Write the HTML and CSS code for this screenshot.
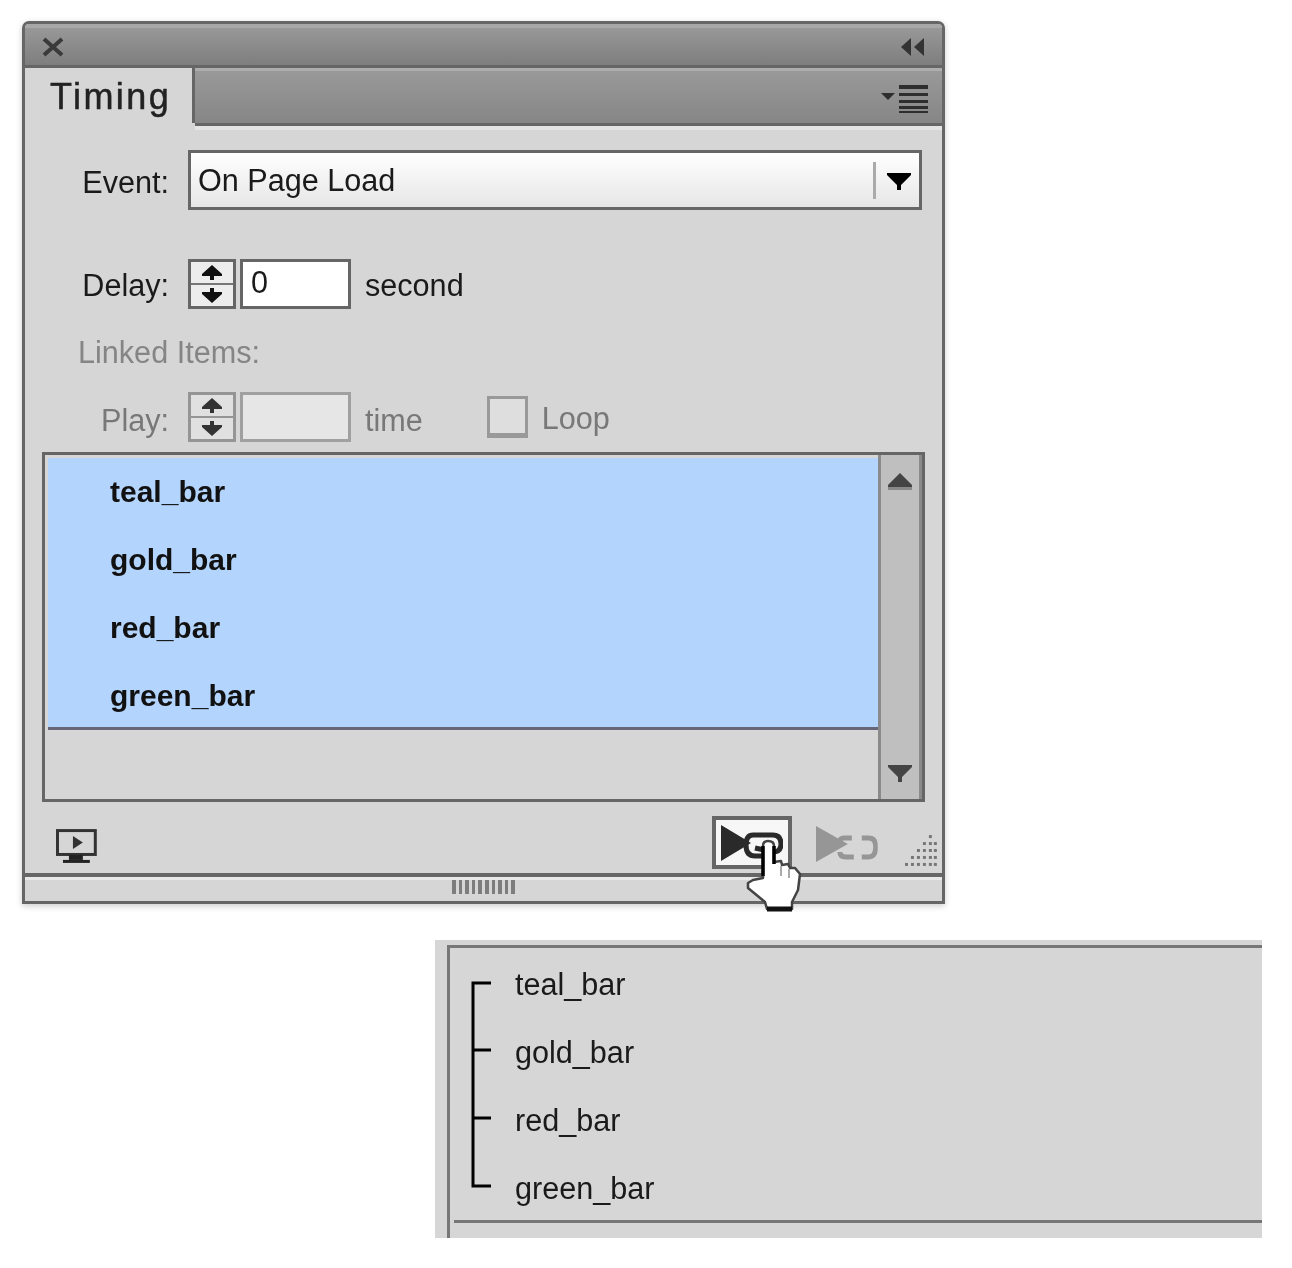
FILE: index.html
```html
<!DOCTYPE html>
<html lang="en">

<head>
	<meta charset="UTF-8">
	<title>Timing</title>
	<link rel="stylesheet" href="styles.css">
</head>

<body>
	<svg class="defs" width="0" height="0">
		<symbol id="upArrow" viewBox="0 0 24 18">
			<path d="M12 0 L24 12 L24 14 L0 14 L0 12 Z" />
			<rect x="0" y="14" width="24" height="3" opacity="0.45" />
		</symbol>
		<symbol id="downArrow" viewBox="0 0 24 18">
			<path d="M0 1 L24 1 L24 3 L14 13 L14 18 L10 18 L10 13 L0 3 Z" />
		</symbol>
		<symbol id="stepUp" viewBox="0 0 20 16">
			<path d="M10 0 L20 9 L20 11 L12 11 L12 15 L8 15 L8 11 L0 11 L0 9 Z" />
		</symbol>
		<symbol id="stepDown" viewBox="0 0 20 16">
			<path d="M8 0 L12 0 L12 4 L20 4 L20 6 L10 15 L0 6 L0 4 L8 4 Z" />
		</symbol>
		<symbol id="link" viewBox="0 0 62 36">
			<path d="M0 0 L32 18 L0 36 Z" />
			<path d="M36 12 L28 12 Q24 12 24 16 M24 26 Q24 31 30 31 L38 31" fill="none" stroke="currentColor" stroke-width="5" />
			<path d="M46 12 L53 12 Q60 12 60 21 Q60 31 53 31 L46 31" fill="none" stroke="currentColor" stroke-width="5" />
		</symbol>
		<symbol id="linkOn" viewBox="0 0 62 36">
			<path d="M0 0 L30 18 L0 36 Z" />
			<path d="M38 10 L32 10 Q25 10 25 20 Q25 31 34 31 L42 31" fill="none" stroke="currentColor" stroke-width="5" />
			<path d="M38 10 L52 10 Q60 10 60 19 Q60 27 52 27 L34 23" fill="none" stroke="currentColor" stroke-width="5" />
		</symbol>
	</svg>

	<div class="panel">
		<div class="titlebar">
			<svg class="closeIcon" width="22" height="20" viewBox="0 0 22 20">
				<path d="M2 2 L20 18 M20 2 L2 18" stroke="#3a3a3a" stroke-width="4" />
			</svg>
			<svg width="24" height="20" viewBox="0 0 24 20" fill="#333">
				<path d="M10 1 L10 19 L0 10 Z M23 1 L23 19 L13 10 Z" />
			</svg>
		</div>

		<div class="tabbar">
			<div class="tab">Timing</div>
			<svg class="menuIcon" width="48" height="28" viewBox="0 0 48 28" fill="#2e2e2e">
				<path d="M0 8 L14 8 L7 15 Z" />
				<rect x="18" y="0" width="29" height="4" />
				<rect x="18" y="8" width="29" height="3" />
				<rect x="18" y="15" width="29" height="3" />
				<rect x="18" y="21" width="29" height="3" />
				<rect x="18" y="26" width="29" height="2" />
			</svg>
		</div>

		<div class="content">
			<div class="row eventRow">
				<span class="label">Event:</span>
				<div class="select">
					<span class="selectText">On Page Load</span>
					<span class="selectDivider"></span>
					<svg class="selectArrow" width="24" height="18"><use href="#downArrow" /></svg>
				</div>
			</div>

			<div class="row delayRow">
				<span class="label">Delay:</span>
				<div class="stepper">
					<div class="stepBtn"><svg width="20" height="16"><use href="#stepUp" /></svg></div>
					<div class="stepBtn"><svg width="20" height="16"><use href="#stepDown" /></svg></div>
				</div>
				<div class="numInput">0</div>
				<span class="unit">second</span>
			</div>

			<div class="row linkedRow">
				<span class="linkedLabel">Linked Items:</span>
			</div>

			<div class="row playRow">
				<span class="label">Play:</span>
				<div class="stepper off">
					<div class="stepBtn"><svg width="20" height="16"><use href="#stepUp" /></svg></div>
					<div class="stepBtn"><svg width="20" height="16"><use href="#stepDown" /></svg></div>
				</div>
				<div class="numInput"></div>
				<span class="unit">time</span>
				<span class="checkbox"></span>
				<span class="loop">Loop</span>
			</div>

			<div class="list">
				<div class="listItems">
					<div class="selected">
						<div class="item">teal_bar</div>
						<div class="item">gold_bar</div>
						<div class="item">red_bar</div>
						<div class="item">green_bar</div>
					</div>
				</div>
				<div class="scrollbar">
					<svg width="24" height="18"><use href="#upArrow" /></svg>
					<svg width="24" height="18"><use href="#downArrow" /></svg>
				</div>
			</div>

			<div class="footer">
				<svg class="monitor" width="41" height="34" viewBox="0 0 41 34">
					<rect x="1.5" y="1.5" width="38" height="24" fill="none" stroke="#333" stroke-width="3" />
					<path d="M17 7 L17 20 L27 13.5 Z" fill="#333" />
					<rect x="13" y="26" width="14" height="5" fill="#222" />
					<rect x="7" y="31" width="27" height="3" fill="#222" />
				</svg>
				<div class="linkBtn">
					<svg width="62" height="36" class="linkDark"><use href="#linkOn" /></svg>
				</div>
				<svg width="62" height="36" class="linkOff"><use href="#link" /></svg>
				<svg class="resize" width="32" height="31" viewBox="0 0 32 31" fill="#777">
					<rect x="24" y="0" width="3" height="3" />
					<rect x="18" y="7" width="3" height="3" /><rect x="24" y="7" width="3" height="3" /><rect x="29" y="7" width="3" height="3" />
					<rect x="12" y="14" width="3" height="3" /><rect x="18" y="14" width="3" height="3" /><rect x="24" y="14" width="3" height="3" /><rect x="29" y="14" width="3" height="3" />
					<rect x="6" y="21" width="3" height="3" /><rect x="12" y="21" width="3" height="3" /><rect x="18" y="21" width="3" height="3" /><rect x="24" y="21" width="3" height="3" /><rect x="29" y="21" width="3" height="3" />
					<rect x="0" y="28" width="3" height="3" /><rect x="6" y="28" width="3" height="3" /><rect x="12" y="28" width="3" height="3" /><rect x="18" y="28" width="3" height="3" /><rect x="24" y="28" width="3" height="3" /><rect x="29" y="28" width="3" height="3" />
				</svg>
			</div>

			<div class="gripbar">
				<div class="grip">
					<i></i><i></i><i></i><i></i><i></i><i></i><i></i><i></i><i></i><i></i>
				</div>
			</div>
		</div>

		<svg class="hand" width="60" height="80" viewBox="0 0 60 80">
			<path d="M18 44 L18 12 Q18 7 23 7 Q29 7 29 12 L29 28 L36 27 L37 31 L43 30 L45 34 L50 34 L55 40 L53 56 L47 68 L47 75 L22 75 L20 68 L3 54 L3 49 L8 46 Z" fill="#fff" stroke="#444" stroke-width="2.5" stroke-linejoin="round" />
			<path d="M18 12 L18 42 M29 12 L29 30" stroke="#000" stroke-width="3.5" fill="none" />
			<path d="M22 75 L47 75" stroke="#111" stroke-width="5" />
			<path d="M36 32 L36 42 M44 35 L44 44" stroke="#aaa" stroke-width="2" />
		</svg>
	</div>

	<div class="linked">
		<div class="linkedBox">
			<div class="linkedRows">
				<svg class="bracket" width="21" height="208" viewBox="0 0 21 208" fill="none" stroke="#000" stroke-width="3">
					<path d="M20 2 L2 2 L2 205 L20 205 M2 69 L20 69 M2 137 L20 137" />
				</svg>
				<div class="linkedItems">
					<div class="item">teal_bar</div>
					<div class="item">gold_bar</div>
					<div class="item">red_bar</div>
					<div class="item">green_bar</div>
				</div>
			</div>
			<div class="linkedLine"></div>
		</div>
	</div>
</body>

</html>
```

FILE: styles.css
```css
* {
	box-sizing: border-box;
	margin: 0;
	padding: 0;
}

body {
	background: #fff;
	font-family: "Liberation Sans", Arial, sans-serif;
	font-size: 30.6px;
	color: #1a1a1a;
}

.defs {
	display: block;
	height: 0;
}

.panel {
	position: relative;
	width: 923px;
	height: 883px;
	margin: 21px 0 0 22px;
	border: 3px solid #666;
	border-radius: 7px 7px 0 0;
	background: #d6d6d6;
	box-shadow: 0 2px 6px rgba(0, 0, 0, 0.2);
	filter: blur(0.7px);
}

.titlebar {
	display: flex;
	justify-content: space-between;
	align-items: center;
	height: 44px;
	padding: 4px 17px 0 17px;
	border-bottom: 3px solid #666;
	background: linear-gradient(#a8a8a8 0, #a8a8a8 4px, #989898 4px, #7e7e7e 100%);
	border-radius: 4px 4px 0 0;
}

.tabbar {
	display: flex;
	justify-content: space-between;
	height: 58px;
	border-bottom: 3px solid #666;
	background: linear-gradient(#adadad 0, #adadad 3px, #999 3px, #868686 100%);
}

.tab {
	position: relative;
	width: 170px;
	height: 62px;
	padding: 4px 0 0 25px;
	border-right: 3px solid #666;
	background: #d6d6d6;
	font-size: 36px;
	letter-spacing: 2.4px;
	line-height: 50px;
	color: #222;
	-webkit-text-stroke: 0.5px #222;
}

.tab::after {
	content: "";
	position: absolute;
	right: -3px;
	bottom: 0;
	width: 3px;
	height: 7px;
	background: #d6d6d6;
}

.menuIcon {
	margin: 17px 13px 0 0;
}

.content {
	height: 775px;
	padding-top: 24px;
	background: linear-gradient(#e4e4e4 0, #e4e4e4 4px, #d6d6d6 4px);
}

.row {
	display: flex;
	align-items: center;
}

.label {
	width: 144px;
	text-align: right;
	flex-shrink: 0;
}

.eventRow {
	height: 60px;
}

.eventRow .label {
	padding-top: 4px;
}

.select {
	display: flex;
	align-items: center;
	width: 734px;
	height: 60px;
	margin-left: 19px;
	border: 3px solid #666;
	background: linear-gradient(#fff, #e6e6e6);
}

.selectText {
	flex: 1;
	padding-left: 7px;
}

.selectDivider {
	width: 3px;
	height: 37px;
	background: #aaa;
}

.selectArrow {
	margin: 2px 8px 0 11px;
	fill: #000;
}

.delayRow {
	height: 50px;
	margin-top: 49px;
}

.delayRow .label {
	padding-top: 2px;
}

.stepper {
	display: flex;
	flex-direction: column;
	width: 48px;
	height: 50px;
	margin-left: 19px;
	border: 3px solid #666;
	fill: #111;
}

.stepBtn {
	display: flex;
	justify-content: center;
	align-items: center;
	flex: 1;
	background: #ededed;
}

.stepBtn:first-child {
	border-bottom: 2px solid #777;
}

.numInput {
	width: 111px;
	height: 50px;
	margin-left: 4px;
	padding: 0 0 0 8px;
	border: 3px solid #666;
	background: #fff;
	line-height: 40px;
}

.unit {
	margin-left: 14px;
	padding-top: 2px;
}

.linkedRow {
	height: 36px;
	margin-top: 25px;
}

.linkedLabel {
	margin-left: 53px;
	color: #858585;
}

.playRow {
	height: 50px;
	margin-top: 22px;
	color: #787878;
}

.playRow .label {
	padding-top: 6px;
}

.playRow .unit {
	padding-top: 6px;
}

.off {
	border-color: #959595;
	fill: #333;
}

.off .stepBtn {
	background: #e0e0e0;
	border-color: #959595;
}

.playRow .numInput {
	border-color: #a0a0a0;
	background: #e6e6e6;
}

.checkbox {
	width: 41px;
	height: 42px;
	margin-left: 64px;
	border: 3px solid #999;
	border-bottom-width: 5px;
	background: #dedede;
}

.loop {
	margin-left: 14px;
	padding-top: 2px;
}

.list {
	display: flex;
	width: 883px;
	height: 350px;
	margin: 10px 0 0 17px;
	border: 3px solid #666;
	padding: 3px 0 0 3px;
}

.listItems {
	width: 830px;
}

.selected {
	height: 272px;
	border-bottom: 3px solid #667;
	background: #b3d4fc;
}

.item {
	display: flex;
	align-items: center;
	height: 68px;
	padding-left: 62px;
}

.selected .item {
	font-size: 30px;
	font-weight: bold;
	color: #111;
}

.scrollbar {
	display: flex;
	flex-direction: column;
	justify-content: space-between;
	align-items: center;
	width: 44px;
	margin-top: -3px;
	padding: 18px 0 17px;
	border-left: 3px solid #8a8a8a;
	border-right: 3px solid #8a8a8a;
	background: #bfbfbf;
	fill: #444;
}

.footer {
	display: flex;
	align-items: flex-end;
	height: 71px;
	padding: 0 5px 4px 31px;
}

.monitor {
	margin: 0 615px 6px 0;
}

.linkBtn {
	display: flex;
	justify-content: center;
	align-items: center;
	width: 81px;
	height: 53px;
	margin-right: 24px;
	border: 4px solid #666;
	background: #f7f7f7;
}

.linkDark {
	color: #2a2a2a;
	fill: #2a2a2a;
}

.linkOff {
	margin: 0 27px 7px 0;
	color: #969696;
	fill: #969696;
}

.resize {
	margin-bottom: 3px;
}

.gripbar {
	display: flex;
	justify-content: center;
	height: 28px;
	padding-top: 3px;
	border-top: 4px solid #666;
	box-shadow: inset 0 3px 0 #e8e8e8;
	background: #d6d6d6;
}

.grip {
	display: flex;
	gap: 3px;
	height: 14px;
}

.grip i {
	width: 3.6px;
	background: #7d7d7d;
}

.hand {
	position: absolute;
	left: 720px;
	top: 810px;
}

.linked {
	width: 827px;
	height: 298px;
	margin: 36px 0 0 435px;
	padding: 5px 0 0 12px;
	background: #d6d6d6;
	filter: blur(0.6px);
}

.linkedBox {
	height: 293px;
	padding: 0 0 0 4px;
	border-top: 3px solid #777;
	border-left: 3px solid #777;
}

.linkedRows {
	display: flex;
	height: 272px;
	padding-left: 17px;
}

.linkedLine {
	height: 3px;
	background: #777;
}

.bracket {
	margin-top: 33px;
	flex-shrink: 0;
}

.linkedItems {
	margin: 2px 0 0 23px;
}

.linkedItems .item {
	padding-left: 0;
}
```
